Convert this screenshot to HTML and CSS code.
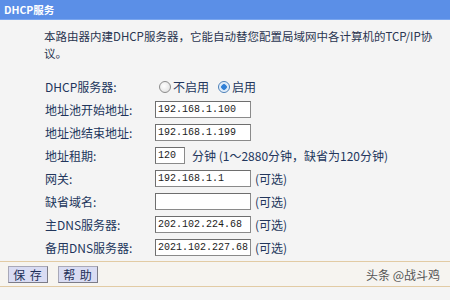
FILE: index.html
```html
<!DOCTYPE html>
<html lang="zh-CN">
<head>
<meta charset="utf-8">
<title>DHCP服务</title>
<link rel="stylesheet" href="styles.css">
</head>
<body>
<div class="header">DHCP服务</div>
<div class="content">
  <p class="desc">本路由器内建DHCP服务器，它能自动替您配置局域网中各计算机的TCP/IP协议。</p>
  <div class="form">
    <div class="row">
      <span class="label">DHCP服务器:</span>
      <span class="radios">
        <span class="radio"></span><span class="opt">不启用</span>
        <span class="radio checked"></span><span class="opt">启用</span>
      </span>
    </div>
    <div class="row">
      <span class="label">地址池开始地址:</span>
      <input class="field" type="text" value="192.168.1.100">
    </div>
    <div class="row">
      <span class="label">地址池结束地址:</span>
      <input class="field" type="text" value="192.168.1.199">
    </div>
    <div class="row">
      <span class="label">地址租期:</span>
      <input class="field short" type="text" value="120">
      <span class="note">分钟 (1～2880分钟，缺省为120分钟)</span>
    </div>
    <div class="row">
      <span class="label">网关:</span>
      <input class="field" type="text" value="192.168.1.1">
      <span class="hint">(可选)</span>
    </div>
    <div class="row">
      <span class="label">缺省域名:</span>
      <input class="field" type="text" value="">
      <span class="hint">(可选)</span>
    </div>
    <div class="row">
      <span class="label">主DNS服务器:</span>
      <input class="field" type="text" value="202.102.224.68">
      <span class="hint">(可选)</span>
    </div>
    <div class="row">
      <span class="label">备用DNS服务器:</span>
      <input class="field" type="text" value="2021.102.227.68">
      <span class="hint">(可选)</span>
    </div>
  </div>
</div>
<div class="footer">
  <button class="btn" type="button">保 存</button>
  <button class="btn" type="button">帮 助</button>
  <span class="watermark">头条 @战斗鸡</span>
</div>
</body>
</html>
```
FILE: styles.css
```css
* { box-sizing: border-box; }
html, body {
  margin: 0;
  padding: 0;
  height: 100%;
}
body {
  background: #f4f4f4;
  font-family: "Noto Sans CJK SC", "Noto Sans", sans-serif;
  font-size: 12px;
  color: #22365c;
  width: 450px;
  height: 300px;
  overflow: hidden;
}
.header {
  height: 20px;
  line-height: 20px;
  background: #5b8fe7;
  border-bottom: 1px solid #7aa6ee;
  color: #ffffff;
  font-size: 10.5px;
  font-weight: bold;
  padding-left: 4px;
}
.content {
  padding-left: 44px;
}
.desc {
  margin: 8px 0 0 0;
  width: 390px;
  font-size: 11.5px;
  line-height: 17px;
  color: #2a3550;
}
.form {
  margin-top: 13px;
  display: flex;
  flex-direction: column;
}
.row {
  height: 23px;
  display: flex;
  align-items: center;
}
.label {
  width: 111px;
  padding-left: 1px;
  flex: none;
}
.radios {
  display: flex;
  align-items: center;
  padding-left: 4px;
}
.radio {
  width: 12px;
  height: 12px;
  border-radius: 50%;
  border: 1px solid #8c8c8c;
  background: radial-gradient(circle at 40% 40%, #ffffff, #dcdcdc);
  margin-right: 2px;
}
.radio.checked {
  border-color: #4a7fb8;
  background: radial-gradient(circle, #2f7fd6 0 2.5px, #cfe3f7 3px, #eef5fc 5px);
}
.opt {
  margin-right: 9px;
}
.field {
  width: 96px;
  height: 17px;
  border: 1px solid #8a8a8a;
  border-top-color: #6e6e6e;
  border-left-color: #6e6e6e;
  background: #ffffff;
  font-family: "Liberation Mono", monospace;
  font-size: 10px;
  color: #1c1c1c;
  padding: 0 0 0 2px;
  margin: 0;
  outline: none;
}
.field.short {
  width: 30px;
}
.note {
  margin-left: 7px;
}
.hint {
  margin-left: 4px;
}
.footer {
  margin-top: 2px;
  height: 26px;
  border-top: 1px solid #e2cba4;
  border-bottom: 1px solid #e2cba4;
  background: #f6f4f0;
  display: flex;
  align-items: center;
  padding: 0 8px;
  gap: 10px;
}
.btn {
  height: 17px;
  width: 40px;
  padding: 0;
  margin: 0;
  background: #d9dcf3;
  border: 1px solid #7c7c88;
  border-top-color: #a8a8b8;
  border-left-color: #a8a8b8;
  font-family: "Noto Sans CJK SC", sans-serif;
  font-size: 12px;
  line-height: 15px;
  letter-spacing: 1px;
  color: #1e2f58;
}
.watermark {
  margin-left: auto;
  margin-right: 2px;
  color: #555555;
  font-size: 12px;
}
```
